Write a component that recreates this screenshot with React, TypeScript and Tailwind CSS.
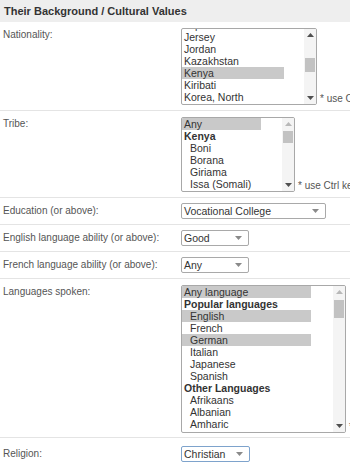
import React from "react"

interface Item {
    text: string,
    bold?: boolean,
    indent?: boolean,
    selected?: boolean
}

const Arrow: React.FC<{ down?: boolean, color: string }> = ({ down, color }) => (
    <svg width="7" height="4" viewBox="0 0 7 4">
        <polygon points={down ? "0,0 7,0 3.5,4" : "0,4 7,4 3.5,0"} fill={color} />
    </svg>
)

interface ListBoxProps {
    box: string,
    optionsWidth: string,
    offset?: string,
    items: Item[],
    thumb: string,
    upLight?: boolean
}
const ListBox: React.FC<ListBoxProps> = ({ box, optionsWidth, offset, items, thumb, upLight }) => (
    <div className={`${box} flex shrink-0 overflow-hidden rounded-[2px] border border-[#a8a8a8] bg-white`}>
        <div className={`${optionsWidth} overflow-hidden`}>
            <div className={offset}>
                {items.map((it, i) => (
                    <div
                        key={i}
                        className={`h-[12px] leading-[12px] text-[10.5px] text-[#333] whitespace-nowrap ${it.indent ? "pl-[8px]" : "pl-[2px]"} ${it.bold ? "font-bold" : ""} ${it.selected ? "bg-[#c9c9c9]" : ""}`}
                    >
                        {it.text}
                    </div>
                ))}
            </div>
        </div>
        <div className="flex-1" />
        <div className="flex w-[12px] flex-col bg-[#f4f4f4]">
            <div className="flex h-[12px] items-center justify-center">
                <Arrow color={upLight ? "#b8b8b8" : "#505050"} />
            </div>
            <div className="flex-1">
                <div className={`${thumb} mx-[1px] bg-[#c2c2c2]`} />
            </div>
            <div className="flex h-[12px] items-center justify-center">
                <Arrow down color="#505050" />
            </div>
        </div>
    </div>
)

const Dropdown: React.FC<{ width: string, value: string, focused?: boolean }> = ({ width, value, focused }) => (
    <div className={`${width} flex h-[16px] shrink-0 items-center justify-between rounded-[2px] border ${focused ? "border-[#7ea3cc]" : "border-[#a9a9a9]"} bg-white pl-[2px] pr-[6px]`}>
        <span className="text-[10.5px] leading-[12px] text-[#333]">{value}</span>
        <Arrow down color="#8a8a8a" />
    </div>
)

const Hint: React.FC<{ text: string }> = ({ text }) => (
    <span className="ml-[3px] self-end whitespace-nowrap text-[10px] leading-[12px] text-[#555]">{text}</span>
)

const Label: React.FC<{ text: string, top?: boolean }> = ({ text, top }) => (
    <div className={`w-[181px] shrink-0 pl-[3px] text-[10px] leading-[12px] text-[#555] ${top ? "pt-[1px]" : ""}`}>
        {text}
    </div>
)

const nationality: Item[] = [
    { text: "Japan" },
    { text: "Jersey" },
    { text: "Jordan" },
    { text: "Kazakhstan" },
    { text: "Kenya", selected: true },
    { text: "Kiribati" },
    { text: "Korea, North" }
]

const tribes: Item[] = [
    { text: "Any", selected: true },
    { text: "Kenya", bold: true },
    { text: "Boni", indent: true },
    { text: "Borana", indent: true },
    { text: "Giriama", indent: true },
    { text: "Issa (Somali)", indent: true }
]

const languages: Item[] = [
    { text: "Any language", selected: true },
    { text: "Popular languages", bold: true },
    { text: "English", indent: true, selected: true },
    { text: "French", indent: true },
    { text: "German", indent: true, selected: true },
    { text: "Italian", indent: true },
    { text: "Japanese", indent: true },
    { text: "Spanish", indent: true },
    { text: "Other Languages", bold: true },
    { text: "Afrikaans", indent: true },
    { text: "Albanian", indent: true },
    { text: "Amharic", indent: true }
]

export default function App() {
    return (
        <div className="h-[468px] w-[350px] overflow-hidden bg-white font-['Liberation_Sans',Arial,sans-serif]">
            <div className="flex h-[22px] items-center bg-[#eeeeee] pl-[4px] text-[11px] font-bold text-[#333]">
                Their Background / Cultural Values
            </div>

            <div className="flex items-start border-b border-[#e4e4e4] pt-[6px] pb-[5px]">
                <Label text="Nationality:" top />
                <div className="flex">
                    <ListBox box="w-[136px] h-[77px]" optionsWidth="w-[102px]" offset="-mt-[10px]" items={nationality} thumb="mt-[17px] h-[14px]" />
                    <Hint text="* use C" />
                </div>
            </div>

            <div className="flex items-start border-b border-[#e4e4e4] pt-[6px] pb-[5px]">
                <Label text="Tribe:" top />
                <div className="flex">
                    <ListBox box="w-[114px] h-[75px]" optionsWidth="w-[79px]" items={tribes} thumb="mt-[1px] h-[12px]" upLight />
                    <Hint text="* use Ctrl ke" />
                </div>
            </div>

            <div className="flex items-center border-b border-[#e4e4e4] py-[5px]">
                <Label text="Education (or above):" />
                <Dropdown width="w-[145px]" value="Vocational College" />
            </div>

            <div className="flex items-center border-b border-[#e4e4e4] py-[5px]">
                <Label text="English language ability (or above):" />
                <Dropdown width="w-[68px]" value="Good" />
            </div>

            <div className="flex items-center border-b border-[#e4e4e4] py-[5px]">
                <Label text="French language ability (or above):" />
                <Dropdown width="w-[68px]" value="Any" />
            </div>

            <div className="flex items-start border-b border-[#e4e4e4] pt-[6px] pb-[4px]">
                <Label text="Languages spoken:" top />
                <div className="flex">
                    <ListBox box="w-[165px] h-[148px]" optionsWidth="w-[129px]" items={languages} thumb="mt-[2px] h-[18px]" upLight />
                    <Hint text="*" />
                </div>
            </div>

            <div className="flex items-center pt-[8px] pb-[6px]">
                <Label text="Religion:" />
                <Dropdown width="w-[69px]" value="Christian" focused />
            </div>
        </div>
    )
}
